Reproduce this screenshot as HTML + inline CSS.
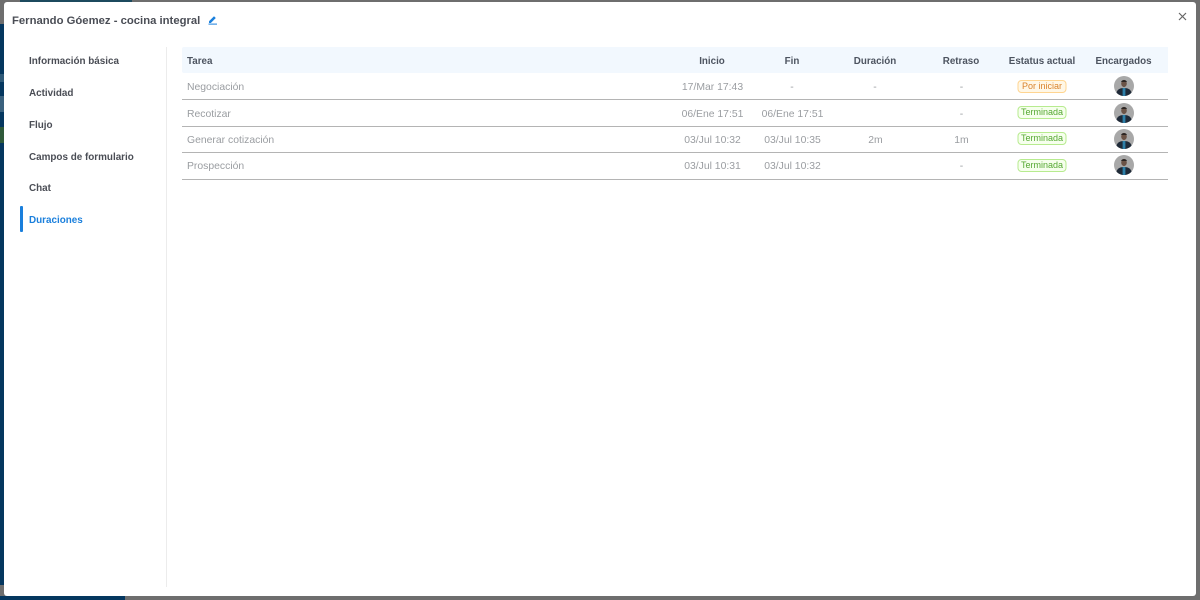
<!DOCTYPE html>
<html><head><meta charset="utf-8"><style>
html,body{margin:0;padding:0;width:1200px;height:600px;overflow:hidden;background:#6e6e6e;font-family:"Liberation Sans",sans-serif}
body{filter:blur(.3px)}
.a{position:absolute;white-space:nowrap}
.c{transform:translateX(-50%)}
.nav{left:29px;font-size:9.9px;font-weight:700;color:#4a4d55;line-height:14px}
.h{top:55px;font-size:9.8px;font-weight:700;color:#4d5460;line-height:14px}
.t{font-size:10.4px;color:#9a9da1;line-height:14px}
.line{position:absolute;left:182px;width:986px;height:1px;background:#b4b4b4}
.b{font-size:9px;line-height:11px;height:11px;width:47px;text-align:center;border-radius:4px;border:1px solid}
.g{color:#55a832;background:#f6ffed;border-color:#b7eb8f}
.o{color:#d9822b;background:#fff7e6;border-color:#ffd591}
svg.av{position:absolute;left:1114px;width:20px;height:20px}
</style></head><body>
<div class="a" style="left:0;top:24px;width:4px;height:576px;background:#05375f"></div>
<div class="a" style="left:0;top:127px;width:4px;height:16px;background:#2f5a3a"></div>
<div class="a" style="left:0;top:96px;width:4px;height:16px;background:#3a617e"></div>
<div class="a" style="left:0;top:74px;width:4px;height:8px;background:#2f5a78"></div>
<div class="a" style="left:0;top:585px;width:4px;height:11px;background:#6e6e6e"></div>
<div class="a" style="left:20px;top:0;width:112px;height:2px;background:#1c4a5e"></div>
<div class="a" style="left:0;top:596px;width:125px;height:4px;background:#05375f"></div>
<div class="a" style="left:4px;top:2px;width:1192px;height:594px;background:#fff;border-radius:3px"></div>

<div class="a" style="left:12px;top:14px;font-size:11.3px;font-weight:700;color:#4a4d55;line-height:15px">Fernando Góemez - cocina integral</div>
<svg class="a" style="left:208px;top:14px" width="10" height="11" viewBox="0 0 10 11"><path d="M1 7.2 6 2.2 7.8 4 2.8 9H1z" fill="#1a7fdc"/><rect x="0.5" y="9.6" width="8.5" height="1" fill="#1a7fdc"/></svg>
<svg class="a" style="left:1177.5px;top:12px" width="9" height="9" viewBox="0 0 9 9"><path d="M1 1 8 8M8 1 1 8" stroke="#666" stroke-width="1.2"/></svg>

<div class="a nav" style="top:55px">Información básica</div>
<div class="a nav" style="top:87px">Actividad</div>
<div class="a nav" style="top:119px">Flujo</div>
<div class="a nav" style="top:151px">Campos de formulario</div>
<div class="a nav" style="top:182px">Chat</div>
<div class="a nav" style="top:214px;color:#1a7fdc">Duraciones</div>
<div class="a" style="left:20px;top:206px;width:3px;height:26px;background:#1a7fdc;border-radius:1px"></div>
<div class="a" style="left:166px;top:47px;width:1px;height:540px;background:#ececec"></div>

<div class="a" style="left:182px;top:47px;width:986px;height:26px;background:#f2f8fe;border-radius:2px 0 0 2px"></div>
<div class="a h" style="left:187px">Tarea</div>
<div class="a h c" style="left:712px">Inicio</div>
<div class="a h c" style="left:792px">Fin</div>
<div class="a h c" style="left:875px">Duración</div>
<div class="a h c" style="left:961px">Retraso</div>
<div class="a h c" style="left:1042px">Estatus actual</div>
<div class="a h c" style="left:1123.5px">Encargados</div>

<div class="line" style="top:99px"></div>
<div class="line" style="top:126px"></div>
<div class="line" style="top:152px"></div>
<div class="line" style="top:179px"></div>

<div class="a t" style="left:187px;top:81px">Negociación</div>
<div class="a t c" style="left:712.5px;top:81px">17/Mar 17:43</div>
<div class="a t c" style="left:792px;top:81px">-</div>
<div class="a t c" style="left:875px;top:81px">-</div>
<div class="a t c" style="left:961.5px;top:81px">-</div>
<div class="a b o c" style="left:1042px;top:80px">Por iniciar</div>

<div class="a t" style="left:187px;top:108px">Recotizar</div>
<div class="a t c" style="left:712.5px;top:108px">06/Ene 17:51</div>
<div class="a t c" style="left:792.5px;top:108px">06/Ene 17:51</div>
<div class="a t c" style="left:961.5px;top:108px">-</div>
<div class="a b g c" style="left:1042px;top:106px">Terminada</div>

<div class="a t" style="left:187px;top:134px">Generar cotización</div>
<div class="a t c" style="left:712.5px;top:134px">03/Jul 10:32</div>
<div class="a t c" style="left:792.5px;top:134px">03/Jul 10:35</div>
<div class="a t c" style="left:875.5px;top:134px">2m</div>
<div class="a t c" style="left:961.5px;top:134px">1m</div>
<div class="a b g c" style="left:1042px;top:132px">Terminada</div>

<div class="a t" style="left:187px;top:160px">Prospección</div>
<div class="a t c" style="left:712.5px;top:160px">03/Jul 10:31</div>
<div class="a t c" style="left:792.5px;top:160px">03/Jul 10:32</div>
<div class="a t c" style="left:961.5px;top:160px">-</div>
<div class="a b g c" style="left:1042px;top:159px">Terminada</div>

<svg class="av" style="top:76px" viewBox="0 0 20 20"><defs><clipPath id="k"><circle cx="10" cy="10" r="10"/></clipPath></defs><g clip-path="url(#k)"><rect width="20" height="20" fill="#a8a8a8"/><path d="M2 20c0-6 3-8 8-8s8 2 8 8z" fill="#1f2a38"/><rect x="8.6" y="12" width="2.8" height="8" fill="#2d7fa8"/><ellipse cx="10" cy="7.5" rx="2.8" ry="3.6" fill="#6b5346"/><path d="M7.2 6c0-2.5 5.6-2.5 5.6 0z" fill="#2a2422"/></g></svg>
<svg class="av" style="top:103px" viewBox="0 0 20 20"><g clip-path="url(#k)"><rect width="20" height="20" fill="#a8a8a8"/><path d="M2 20c0-6 3-8 8-8s8 2 8 8z" fill="#1f2a38"/><rect x="8.6" y="12" width="2.8" height="8" fill="#2d7fa8"/><ellipse cx="10" cy="7.5" rx="2.8" ry="3.6" fill="#6b5346"/><path d="M7.2 6c0-2.5 5.6-2.5 5.6 0z" fill="#2a2422"/></g></svg>
<svg class="av" style="top:129px" viewBox="0 0 20 20"><g clip-path="url(#k)"><rect width="20" height="20" fill="#a8a8a8"/><path d="M2 20c0-6 3-8 8-8s8 2 8 8z" fill="#1f2a38"/><rect x="8.6" y="12" width="2.8" height="8" fill="#2d7fa8"/><ellipse cx="10" cy="7.5" rx="2.8" ry="3.6" fill="#6b5346"/><path d="M7.2 6c0-2.5 5.6-2.5 5.6 0z" fill="#2a2422"/></g></svg>
<svg class="av" style="top:155px" viewBox="0 0 20 20"><g clip-path="url(#k)"><rect width="20" height="20" fill="#a8a8a8"/><path d="M2 20c0-6 3-8 8-8s8 2 8 8z" fill="#1f2a38"/><rect x="8.6" y="12" width="2.8" height="8" fill="#2d7fa8"/><ellipse cx="10" cy="7.5" rx="2.8" ry="3.6" fill="#6b5346"/><path d="M7.2 6c0-2.5 5.6-2.5 5.6 0z" fill="#2a2422"/></g></svg>
</body></html>
